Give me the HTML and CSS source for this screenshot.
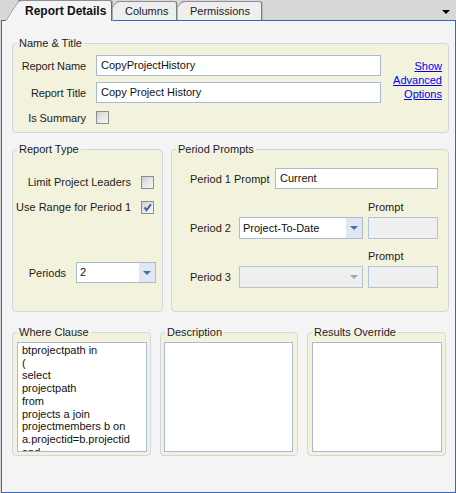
FILE: index.html
```html
<!DOCTYPE html>
<html>
<head>
<meta charset="utf-8">
<title>Report Details</title>
<link rel="stylesheet" href="styles.css">
</head>
<body>
<div class="tabstrip">
  <div class="tab active">Report Details</div>
  <div class="tab t2">Columns</div>
  <div class="tab t3">Permissions</div>
  <div class="tab-menu"></div>
</div>
<div class="panel">
  <fieldset class="grp">
    <legend>Name &amp; Title</legend>
    <div class="name-body">
      <span class="lbl">Report Name</span>
      <div class="input">CopyProjectHistory</div>
      <span class="lbl">Report Title</span>
      <div class="input">Copy Project History</div>
      <span class="lbl">Is Summary</span>
      <span class="check"></span>
      <a class="adv" href="#">Show<br>Advanced<br>Options</a>
    </div>
  </fieldset>

  <div class="row2">
    <fieldset class="grp tall">
      <legend>Report Type</legend>
      <div class="rt-body">
        <div class="cb-row"><span>Limit Project Leaders</span><span class="check"></span></div>
        <div class="cb-row"><span>Use Range for Period 1</span><span class="check"><svg viewBox="0 0 11 11" width="11" height="11"><path d="M2.6 5.4 L4.6 8.2 L8.9 2.3" fill="none" stroke="#3d57a3" stroke-width="1.9"/></svg></span></div>
        <div class="periods-row"><span>Periods</span>
          <div class="select w80"><span class="val">2</span><span class="btn"><i class="tri"></i></span></div>
        </div>
      </div>
    </fieldset>
    <fieldset class="grp tall">
      <legend>Period Prompts</legend>
      <div class="pp-body">
        <div class="pp-row1"><span class="pp-lbl">Period 1 Prompt</span><div class="input">Current</div></div>
        <div class="cap">Prompt</div>
        <div class="pp-grid">
          <span class="lbl-l">Period 2</span>
          <div class="select"><span class="val">Project-To-Date</span><span class="btn"><i class="tri"></i></span></div>
          <div class="input disabled"></div>
        </div>
        <div class="cap cap2">Prompt</div>
        <div class="pp-grid">
          <span class="lbl-l">Period 3</span>
          <div class="select disabled"><span class="val"></span><span class="btn"><i class="tri"></i></span></div>
          <div class="input disabled"></div>
        </div>
      </div>
    </fieldset>
  </div>

  <div class="row3">
    <fieldset class="grp">
      <legend>Where Clause</legend>
      <div class="area">btprojectpath in
(
select
projectpath
from
projects a join
projectmembers b on
a.projectid=b.projectid
and
b.userid = @userid
)</div>
    </fieldset>
    <fieldset class="grp">
      <legend>Description</legend>
      <div class="area desc"></div>
    </fieldset>
    <fieldset class="grp">
      <legend>Results Override</legend>
      <div class="area"></div>
    </fieldset>
  </div>
</div>
</body>
</html>
```
FILE: styles.css
```css
* { box-sizing: border-box; }
html, body { margin: 0; padding: 0; }
body {
  width: 456px;
  height: 493px;
  overflow: hidden;
  background: #d7d7d7;
  font-family: "Liberation Sans", Arial, sans-serif;
  font-size: 11px;
  color: #1b1b1b;
}

/* ---------- tabs ---------- */
.tabstrip {
  position: relative;
  z-index: 2;
  display: flex;
  align-items: flex-start;
  height: 20px;
  padding-left: 18px;
}
.tab {
  position: relative;
  height: 19px;
  margin-top: 1px;
  padding-left: 8px;
  line-height: 18px;
  background: #eeeeee;
  border-top: 1px solid #8e8e8e;
  border-right: 1px solid #7d7d7d;
  border-top-right-radius: 3px;
  box-shadow: 1px 0 0 #b9b9b9;
  white-space: nowrap;
}
.tab::before {
  content: "";
  position: absolute;
  z-index: -1;
  top: -1px;
  bottom: 0;
  left: -13px;
  width: 18px;
  background: inherit;
  border-top: 1px solid #8e8e8e;
  border-left: 1px solid #8e8e8e;
  border-top-left-radius: 4px;
  transform: skewX(-33deg);
  transform-origin: 0 100%;
}
.tab.active {
  z-index: 5;
  width: 94px;
  height: 21px;
  margin-top: 0;
  margin-bottom: -1px;
  padding-left: 7px;
  line-height: 20px;
  font-weight: bold;
  font-size: 12px;
  color: #111;
  background: #f4f4f4;
  border-right-color: #6a6a6a;
  box-shadow: 1px 0 0 #a8a8a8;
}
.tab.t2 { z-index: 4; width: 60px; margin-left: 5px; }
.tab.t3 { z-index: 3; width: 80px; margin-left: 5px; }
.tab-menu {
  margin-left: auto;
  margin-top: 10px;
  margin-right: 6px;
  width: 0;
  height: 0;
  border-left: 4px solid transparent;
  border-right: 4px solid transparent;
  border-top: 4px solid #000;
}

/* ---------- panel ---------- */
.panel {
  height: 473px;
  margin-left: 1px;
  border: 1px solid #3469c2;
  background: #f4f4f4;
  padding: 15px 6px 0 10px;
}
fieldset.grp {
  margin: 0;
  padding: 0;
  min-width: 0;
  border: 1px solid #d0d7df;
  border-radius: 4px;
  background: #f3f3dd;
}
fieldset.grp legend {
  margin-left: 4px;
  padding: 0 2px;
  font-size: 11px;
  line-height: 14px;
  color: #1b1b2b;
}

/* Name & Title */
.name-body {
  display: grid;
  grid-template-columns: 73px 285px 1fr;
  grid-template-rows: 21px 21px 17px;
  column-gap: 10px;
  row-gap: 6px;
  padding: 5px 6px 6px 0;
}
.lbl { text-align: right; align-self: center; white-space: nowrap; letter-spacing: -0.1px; }
.adv {
  grid-column: 3;
  grid-row: 1 / span 3;
  margin-top: 4px;
  text-align: right;
  line-height: 14px;
  color: #0000f0;
  text-decoration: underline;
}
.input {
  height: 21px;
  border: 1px solid #a9bbd3;
  background: #fff;
  padding-left: 4px;
  line-height: 19px;
  white-space: nowrap;
  overflow: hidden;
  color: #111;
}
.input.disabled { background: #efefef; border-color: #b2c2d7; height: auto; }
.check {
  display: block;
  width: 13px;
  height: 13px;
  align-self: center;
  border: 1px solid #8d8d8d;
  background: linear-gradient(135deg, #cfcfcf 0%, #e6e6e6 50%, #f8f8f8 100%);
}
.check svg { display: block; }

/* row 2 */
.row2 {
  display: grid;
  grid-template-columns: 151px 1fr;
  column-gap: 8px;
  margin-top: 9px;
}
fieldset.tall { height: 170px; }
.rt-body { padding: 18px 8px 0 0; }
.cb-row {
  display: flex;
  justify-content: flex-end;
  align-items: center;
  gap: 10px;
  height: 16px;
  white-space: nowrap;
}
.cb-row + .cb-row { margin-top: 9px; }
.periods-row {
  display: flex;
  justify-content: flex-end;
  align-items: center;
  gap: 10px;
  margin-top: 47px;
  margin-right: -2px;
}
.select {
  display: flex;
  height: 21px;
  border: 1px solid #a9bbd3;
  background: #fff;
  line-height: 19px;
  white-space: nowrap;
  color: #111;
}
.select.w80 { width: 80px; }
.select .val { flex: 1; padding-left: 3px; overflow: hidden; }
.select .btn {
  width: 16px;
  display: flex;
  align-items: center;
  justify-content: center;
  background: #dfe7f2;
}
.tri {
  width: 0;
  height: 0;
  border-left: 4px solid transparent;
  border-right: 4px solid transparent;
  border-top: 4px solid #4a6eab;
}
.select.disabled { background: #efefef; border-color: #b2c2d7; }
.select.disabled .btn { background: transparent; }
.select.disabled .tri { border-top-color: #a6a6a6; }

.pp-body { padding: 12px 10px 0 18px; }
.pp-row1 { display: flex; align-items: center; height: 21px; }
.pp-lbl { width: 85px; white-space: nowrap; }
.pp-row1 .input { flex: 1; }
.cap { margin: 11px 0 0 178px; height: 14px; line-height: 14px; }
.cap.cap2 { margin-top: 10px; }
.pp-grid {
  display: grid;
  grid-template-columns: 44px 124px 70px;
  column-gap: 5px;
  height: 22px;
  margin-top: 3px;
}
.pp-grid .select { height: 22px; line-height: 20px; }
.lbl-l { align-self: center; white-space: nowrap; }

/* row 3 */
.row3 {
  display: grid;
  grid-template-columns: 139px 138px 139px;
  column-gap: 9px;
  margin-top: 13px;
}
.area {
  height: 110px;
  margin: 3px 3px 3px 4px;
  border: 1px solid #a9bbd3;
  background: #fff;
  padding: 1px 0 0 4px;
  overflow: hidden;
  white-space: pre;
  line-height: 12.7px;
  color: #111;
}
.area.desc { margin: 3px 4px 3px 3px; }
```
